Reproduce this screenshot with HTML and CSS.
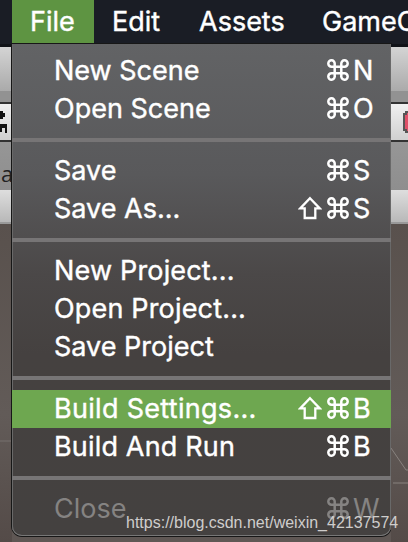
FILE: index.html
```html
<!DOCTYPE html>
<html lang="en">
<head>
<meta charset="utf-8">
<title>File menu</title>
<link rel="stylesheet" href="styles.css">
</head>
<body>
<svg class="defs" width="0" height="0" aria-hidden="true">
  <symbol id="cmd" viewBox="0 0 22 22"><path d="M7.7 7.7V4.6A3.2 3.2 0 1 0 4.5 7.7H17.5A3.2 3.2 0 1 0 14.3 4.6V17.4A3.2 3.2 0 1 0 17.5 14.3H4.5A3.2 3.2 0 1 0 7.7 17.4Z" fill="none" stroke="currentColor" stroke-width="2.5"/></symbol>
  <symbol id="shift" viewBox="0 0 24 24"><path d="M12 2.2L21.8 12.4H17.3V22H6.7V12.4H2.2Z" fill="none" stroke="currentColor" stroke-width="2.3"/></symbol>
</svg>
<div class="screen">
  <nav class="menubar">
    <span class="tab active">File</span>
    <span class="tab edit">Edit</span>
    <span class="tab assets">Assets</span>
    <span class="tab game">GameObject</span>
  </nav>
  <main class="workspace">
    <aside class="edge left">
      <div class="titlebar"></div><div class="titlefoot"></div>
      <div class="toolbar"><svg width="12" height="36" viewBox="0 0 12 36"><path d="M0 7h3v2h2v4H3v2H0zM0 20h7v9H5v-5H2v4H0z" fill="#111"/></svg></div>
      <div class="tabs">a</div><div class="pane"></div>
      <div class="scene"><svg width="12" height="318"><path d="M0 217H12" stroke="#77716e"/></svg></div>
    </aside>
    <section class="menu">
      <div class="row"><span>New Scene</span><span class="keys"><svg class="cmd"><use href="#cmd"/></svg><b>N</b></span></div>
      <div class="row"><span>Open Scene</span><span class="keys"><svg class="cmd"><use href="#cmd"/></svg><b>O</b></span></div>
      <hr>
      <div class="row"><span>Save</span><span class="keys"><svg class="cmd"><use href="#cmd"/></svg><b>S</b></span></div>
      <div class="row"><span>Save As...</span><span class="keys"><svg class="shift"><use href="#shift"/></svg><svg class="cmd"><use href="#cmd"/></svg><b>S</b></span></div>
      <hr>
      <div class="row"><span class="wide">New Project...</span></div>
      <div class="row"><span class="wide">Open Project...</span></div>
      <div class="row"><span>Save Project</span></div>
      <hr>
      <div class="row selected"><span class="wider">Build Settings...</span><span class="keys"><svg class="shift"><use href="#shift"/></svg><svg class="cmd"><use href="#cmd"/></svg><b>B</b></span></div>
      <div class="row"><span class="wide">Build And Run</span><span class="keys"><svg class="cmd"><use href="#cmd"/></svg><b>B</b></span></div>
      <hr>
      <div class="row disabled"><span>Close</span><span class="keys"><svg class="cmd"><use href="#cmd"/></svg><b>W</b></span></div>
    </section>
    <aside class="edge right">
      <div class="titlebar"></div><div class="titlefoot"></div>
      <div class="toolbar"><svg width="17" height="36" viewBox="0 0 17 36"><path d="M17 8h-2v2h-2v16h2v2h2" fill="#df5068" stroke="#555" stroke-width="2"/></svg></div>
      <div class="tabs"></div><div class="pane"></div>
      <div class="scene"><svg width="17" height="318"><path d="M0 224L15 246H17M2 259H17" fill="none" stroke="#88827f"/></svg></div>
    </aside>
  </main>
  <div class="watermark">https://blog.csdn.net/weixin_42137574</div>
</div>
</body>
</html>
```
FILE: styles.css
```css
* { box-sizing: border-box; }
body { margin: 0; overflow: hidden; font-family: Inter, "Liberation Sans", sans-serif; font-size: 27px; color: #fff; }
.defs { position: absolute; }
.screen { position: relative; width: 408px; height: 542px; overflow: hidden; background: #5f5754; }
.menubar { display: flex; height: 44px; background: #1a1d25; line-height: 44px; padding-left: 12px; white-space: nowrap; overflow: hidden; -webkit-text-stroke: 0.4px; }
.tab { flex: none; }
.active { width: 82px; padding-left: 18px; background: #5e9442; }
.edit { width: 105px; padding-left: 18px; }
.assets { width: 123px; }
.workspace { display: flex; height: 498px; align-items: flex-start; }
.edge { height: 498px; overflow: hidden; }
.left { width: 12px; }
.right { width: 17px; flex: none; }
.titlebar { height: 47px; border-top: 3px solid #111318; background: linear-gradient(#d4d4d4, #aaa); }
.titlefoot { height: 13px; background: #929292; border-bottom: 2px solid #333; }
.toolbar { height: 36px; background: linear-gradient(#f0f0f0, #d0d0d0); }
.toolbar svg, .scene svg { display: block; }
.tabs { height: 50px; border-top: 2px solid #333; background: linear-gradient(#969696, #8e8e8e); color: #222; font: 22px/62px "Open Sans", sans-serif; padding-left: 1px; }
.pane { height: 34px; border-bottom: 2px solid #999; background: linear-gradient(#dedede, #b8b8b8); }
.scene { height: 318px; background: linear-gradient(#59514d, #625b58 60%, #544b48); }
.menu { flex: 1; height: 492px; padding-top: 8px; background: linear-gradient(#626365 0, #59595b 130px, #4b4848 230px, #454140 310px, #444140); border-radius: 0 0 10px 10px; box-shadow: 0 0 0 1px #171717, inset 0 -1px 0 #777, inset 1px 0 0 #696969, inset -1px 0 0 #696969; }
.row { display: flex; justify-content: space-between; height: 38px; padding-left: 42px; line-height: 37px; white-space: nowrap; -webkit-text-stroke: 0.4px; }
.wide { letter-spacing: 0.17px; }
.wider { letter-spacing: 0.3px; }
.selected { background: #6ea750; }
.disabled { color: #858382; -webkit-text-stroke: 0; }
.menu hr { height: 4px; margin: 10px 0; border: 0; background: #777576; }
.keys { display: flex; align-items: center; height: 37px; width: 95px; justify-content: flex-end; padding-right: 2px; }
.keys svg { flex: none; margin-bottom: 1px; }
.keys b { width: 36px; font-weight: 400; font-size: 27px; }
.cmd { width: 22px; height: 22px; margin-right: 4px; }
.shift { width: 24px; height: 24px; margin-right: 5px; }
.watermark { position: absolute; left: 126px; top: 513px; font: 16px/20px "Liberation Sans", sans-serif; color: #cfcdcc; white-space: nowrap; }
```
